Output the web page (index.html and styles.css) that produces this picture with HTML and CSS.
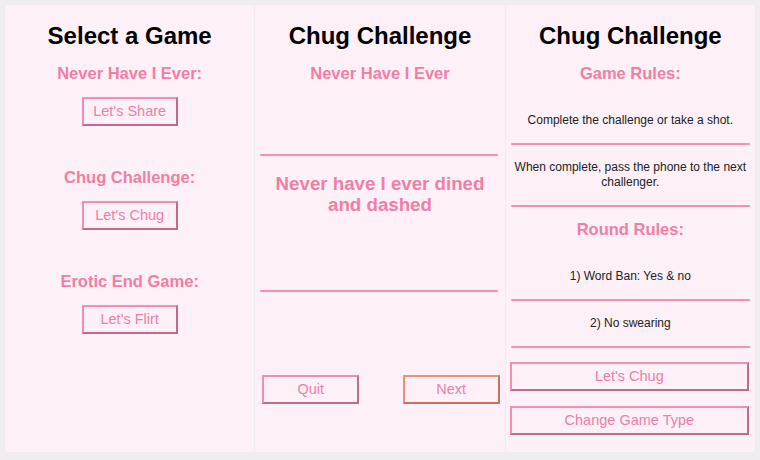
FILE: index.html
```html
<!DOCTYPE html>
<html lang="en">
<head>
<meta charset="utf-8">
<title>Party Games</title>
<link rel="stylesheet" href="styles.css">
</head>
<body>
<div class="screens">
  <section class="panel">
    <h1 class="title">Select a Game</h1>
    <div class="game">
      <h2 class="subtitle">Never Have I Ever:</h2>
      <button class="btn btn-small">Let's Share</button>
    </div>
    <div class="game">
      <h2 class="subtitle">Chug Challenge:</h2>
      <button class="btn btn-small">Let's Chug</button>
    </div>
    <div class="game">
      <h2 class="subtitle">Erotic End Game:</h2>
      <button class="btn btn-small">Let's Flirt</button>
    </div>
  </section>

  <section class="panel">
    <h1 class="title">Chug Challenge</h1>
    <h2 class="subtitle">Never Have I Ever</h2>
    <hr class="rule rule-q-top">
    <div class="question">Never have I ever dined and dashed</div>
    <hr class="rule rule-q">
    <div class="nav">
      <button class="btn btn-nav">Quit</button>
      <button class="btn btn-nav btn-focus">Next</button>
    </div>
  </section>

  <section class="panel">
    <h1 class="title">Chug Challenge</h1>
    <h2 class="subtitle subtitle-rules">Game Rules:</h2>
    <p class="rule-text">Complete the challenge or take a shot.</p>
    <hr class="rule rule-side">
    <p class="rule-text">When complete, pass the phone to the next challenger.</p>
    <hr class="rule rule-side">
    <h2 class="subtitle subtitle-round">Round Rules:</h2>
    <p class="rule-text">1) Word Ban: Yes &amp; no</p>
    <hr class="rule rule-side">
    <p class="rule-text">2) No swearing</p>
    <hr class="rule rule-side">
    <div class="actions">
      <button class="btn btn-wide">Let's Chug</button>
      <button class="btn btn-wide">Change Game Type</button>
    </div>
  </section>
</div>
</body>
</html>
```

FILE: styles.css
```css
* { box-sizing: border-box; }

html, body {
  margin: 0;
  padding: 0;
  background: #efedf0;
  font-family: "Liberation Sans", Arial, sans-serif;
}

.screens {
  display: flex;
  gap: 1px;
  padding: 5px 5px 0 5px;
  background: #efedf0;
}

.panel {
  flex: 1 1 0;
  height: 447px;
  background: #fdf0f7;
  padding-top: 17px;
  display: flex;
  flex-direction: column;
  align-items: center;
  text-align: center;
}

.title {
  margin: 0;
  font-size: 24px;
  line-height: 28px;
  font-weight: bold;
  color: #000;
}

.subtitle {
  margin: 13px 0 0 0;
  font-size: 16.5px;
  line-height: 20px;
  font-weight: bold;
  color: #f07fa5;
}

.game {
  display: flex;
  flex-direction: column;
  align-items: center;
}

.game + .game { margin-top: 28px; }

.btn {
  font-family: "Liberation Sans", Arial, sans-serif;
  font-size: 14.5px;
  color: #ec7fa8;
  background: transparent;
  border: 2px solid;
  border-color: #f48db2 #bd6a8e #bd6a8e #f48db2;
  height: 29px;
  padding: 0;
  line-height: 25px;
}

.btn-small {
  width: 96px;
  margin-top: 14px;
}

.rule {
  height: 2px;
  border: 0;
  margin: 0;
  background: #f38fb4;
  border-radius: 1px;
  align-self: stretch;
}

.rule-q-top {
  margin: 71px 7px 0 5px;
}

.rule-q {
  margin: 0 7px 0 5px;
}

.question {
  height: 134px;
  padding: 17px 14px 0;
  font-size: 18.7px;
  line-height: 21px;
  font-weight: bold;
  color: #f07fa5;
  align-self: stretch;
}

.nav {
  align-self: stretch;
  display: flex;
  justify-content: space-between;
  padding: 0 5px 0 7px;
  margin-top: 83px;
}

.btn-nav { width: 97px; }

.btn-focus {
  border-color: #ef8f78 #c9705e #c9705e #ef8f78;
}

.subtitle-rules { margin-bottom: 15px; }

.subtitle-round {
  margin-top: 12px;
  margin-bottom: 15px;
}

.rule-text {
  margin: 0;
  padding: 15px 8px;
  font-size: 12px;
  line-height: 15px;
  color: #222;
  align-self: stretch;
}

.rule-side {
  margin: 0 5px 0 5px;
}

.actions {
  align-self: stretch;
  display: flex;
  flex-direction: column;
  gap: 15px;
  padding: 0 6px 0 4px;
  margin-top: 14px;
}

.btn-wide { width: 100%; }
```
